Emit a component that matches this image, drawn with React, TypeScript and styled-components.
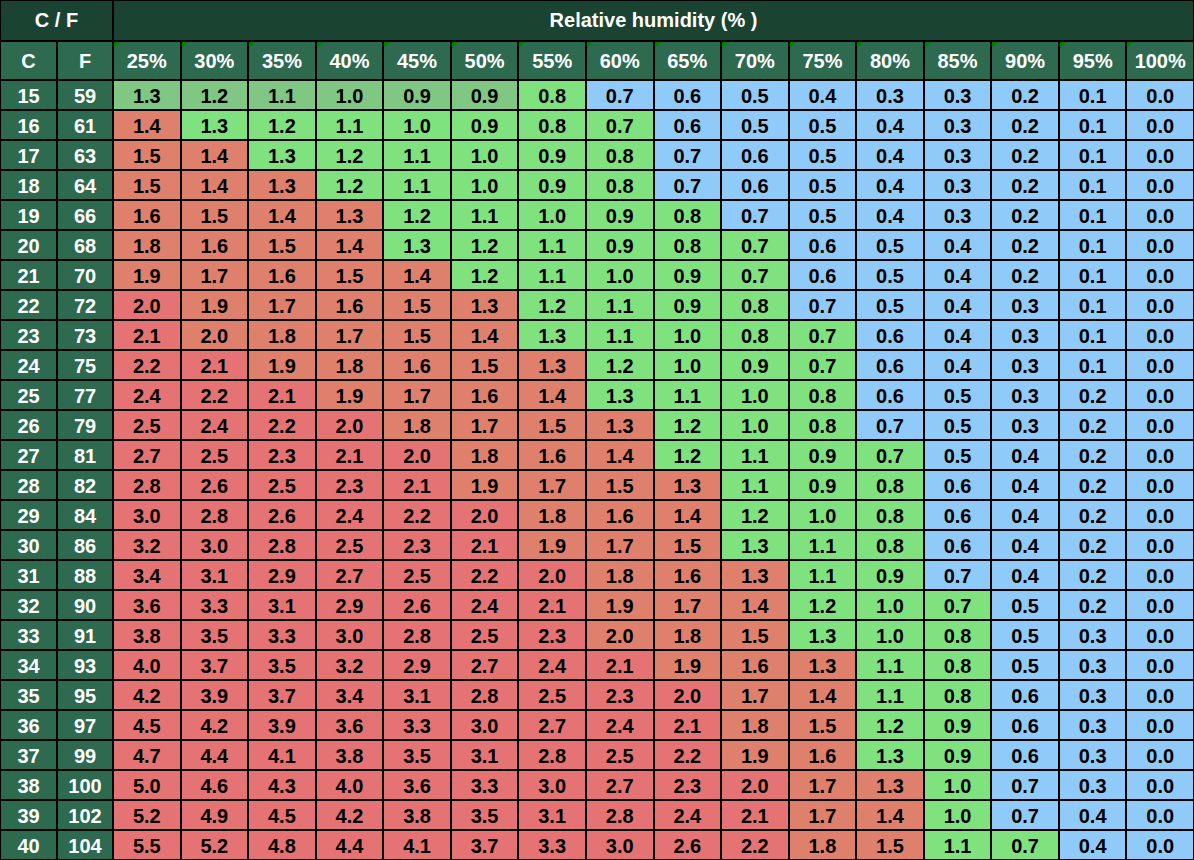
import React from 'react';
import styled, { createGlobalStyle } from 'styled-components';

const GlobalStyle = createGlobalStyle`
  html, body {
    margin: 0;
    padding: 0;
    background: #ffffff;
  }
  body {
    font-family: 'Liberation Sans', Arial, sans-serif;
  }
`;

type Tone = 'M' | 'G' | 'B' | 'S' | 'R';

const toneColors: Record<Tone, string> = {
  M: '#81c784',
  G: '#80e27e',
  B: '#90caf9',
  S: '#de806c',
  R: '#e57373',
};

const humidity = [25, 30, 35, 40, 45, 50, 55, 60, 65, 70, 75, 80, 85, 90, 95, 100];

// celsius, fahrenheit, values, colour of each cell
const rows: [number, number, string, string][] = [
  [15, 59, '1.3 1.2 1.1 1.0 0.9 0.9 0.8 0.7 0.6 0.5 0.4 0.3 0.3 0.2 0.1 0.0', 'MMMMMMGBBBBBBBBB'],
  [16, 61, '1.4 1.3 1.2 1.1 1.0 0.9 0.8 0.7 0.6 0.5 0.5 0.4 0.3 0.2 0.1 0.0', 'SGGGGGGGBBBBBBBB'],
  [17, 63, '1.5 1.4 1.3 1.2 1.1 1.0 0.9 0.8 0.7 0.6 0.5 0.4 0.3 0.2 0.1 0.0', 'SSGGGGGGBBBBBBBB'],
  [18, 64, '1.5 1.4 1.3 1.2 1.1 1.0 0.9 0.8 0.7 0.6 0.5 0.4 0.3 0.2 0.1 0.0', 'SSSGGGGGBBBBBBBB'],
  [19, 66, '1.6 1.5 1.4 1.3 1.2 1.1 1.0 0.9 0.8 0.7 0.5 0.4 0.3 0.2 0.1 0.0', 'SSSSGGGGGBBBBBBB'],
  [20, 68, '1.8 1.6 1.5 1.4 1.3 1.2 1.1 0.9 0.8 0.7 0.6 0.5 0.4 0.2 0.1 0.0', 'SSSSGGGGGGBBBBBB'],
  [21, 70, '1.9 1.7 1.6 1.5 1.4 1.2 1.1 1.0 0.9 0.7 0.6 0.5 0.4 0.2 0.1 0.0', 'SSSSSGGGGGBBBBBB'],
  [22, 72, '2.0 1.9 1.7 1.6 1.5 1.3 1.2 1.1 0.9 0.8 0.7 0.5 0.4 0.3 0.1 0.0', 'RSSSSSGGGGBBBBBB'],
  [23, 73, '2.1 2.0 1.8 1.7 1.5 1.4 1.3 1.1 1.0 0.8 0.7 0.6 0.4 0.3 0.1 0.0', 'RSSSSSGGGGGBBBBB'],
  [24, 75, '2.2 2.1 1.9 1.8 1.6 1.5 1.3 1.2 1.0 0.9 0.7 0.6 0.4 0.3 0.1 0.0', 'RRSSSSSGGGGBBBBB'],
  [25, 77, '2.4 2.2 2.1 1.9 1.7 1.6 1.4 1.3 1.1 1.0 0.8 0.6 0.5 0.3 0.2 0.0', 'RRRSSSSGGGGBBBBB'],
  [26, 79, '2.5 2.4 2.2 2.0 1.8 1.7 1.5 1.3 1.2 1.0 0.8 0.7 0.5 0.3 0.2 0.0', 'RRRRSSSSGGGBBBBB'],
  [27, 81, '2.7 2.5 2.3 2.1 2.0 1.8 1.6 1.4 1.2 1.1 0.9 0.7 0.5 0.4 0.2 0.0', 'RRRRRSSSGGGGBBBB'],
  [28, 82, '2.8 2.6 2.5 2.3 2.1 1.9 1.7 1.5 1.3 1.1 0.9 0.8 0.6 0.4 0.2 0.0', 'RRRRRSSSSGGGBBBB'],
  [29, 84, '3.0 2.8 2.6 2.4 2.2 2.0 1.8 1.6 1.4 1.2 1.0 0.8 0.6 0.4 0.2 0.0', 'RRRRRRSSSGGGBBBB'],
  [30, 86, '3.2 3.0 2.8 2.5 2.3 2.1 1.9 1.7 1.5 1.3 1.1 0.8 0.6 0.4 0.2 0.0', 'RRRRRRSSSGGGBBBB'],
  [31, 88, '3.4 3.1 2.9 2.7 2.5 2.2 2.0 1.8 1.6 1.3 1.1 0.9 0.7 0.4 0.2 0.0', 'RRRRRRRSSSGGBBBB'],
  [32, 90, '3.6 3.3 3.1 2.9 2.6 2.4 2.1 1.9 1.7 1.4 1.2 1.0 0.7 0.5 0.2 0.0', 'RRRRRRRSSSGGGBBB'],
  [33, 91, '3.8 3.5 3.3 3.0 2.8 2.5 2.3 2.0 1.8 1.5 1.3 1.0 0.8 0.5 0.3 0.0', 'RRRRRRRSSSGGGBBB'],
  [34, 93, '4.0 3.7 3.5 3.2 2.9 2.7 2.4 2.1 1.9 1.6 1.3 1.1 0.8 0.5 0.3 0.0', 'RRRRRRRRSSSGGBBB'],
  [35, 95, '4.2 3.9 3.7 3.4 3.1 2.8 2.5 2.3 2.0 1.7 1.4 1.1 0.8 0.6 0.3 0.0', 'RRRRRRRRRSSGGBBB'],
  [36, 97, '4.5 4.2 3.9 3.6 3.3 3.0 2.7 2.4 2.1 1.8 1.5 1.2 0.9 0.6 0.3 0.0', 'RRRRRRRRRSSGGBBB'],
  [37, 99, '4.7 4.4 4.1 3.8 3.5 3.1 2.8 2.5 2.2 1.9 1.6 1.3 0.9 0.6 0.3 0.0', 'RRRRRRRRRSSGGBBB'],
  [38, 100, '5.0 4.6 4.3 4.0 3.6 3.3 3.0 2.7 2.3 2.0 1.7 1.3 1.0 0.7 0.3 0.0', 'RRRRRRRRRRSSGBBB'],
  [39, 102, '5.2 4.9 4.5 4.2 3.8 3.5 3.1 2.8 2.4 2.1 1.7 1.4 1.0 0.7 0.4 0.0', 'RRRRRRRRRRSSGBBB'],
  [40, 104, '5.5 5.2 4.8 4.4 4.1 3.7 3.3 3.0 2.6 2.2 1.8 1.5 1.1 0.7 0.4 0.0', 'RRRRRRRRRRSSGGBB'],
];

const Table = styled.table`
  width: 1194px;
  table-layout: fixed;
  border-collapse: separate;
  border-spacing: 0;
  font-family: 'Liberation Sans', Arial, sans-serif;
  font-weight: bold;
  font-size: 20px;
`;

const Col = styled.col<{ $w?: number }>`
  width: ${(p) => (p.$w ? `${p.$w}px` : 'auto')};
`;

const TitleCell = styled.th`
  box-sizing: border-box;
  height: 41px;
  padding: 0;
  border: 1px solid #000;
  background: #1b4332;
  color: #ffffff;
  text-align: center;
  vertical-align: middle;
`;

const HeadCell = styled.th<{ $flag?: boolean }>`
  position: relative;
  box-sizing: border-box;
  height: 39px;
  padding: 2px 0 0;
  border: 1px solid #000;
  background: #2d6a4f;
  color: #ffffff;
  text-align: center;
  vertical-align: middle;

  &::before {
    content: '';
    display: ${(p) => (p.$flag ? 'block' : 'none')};
    position: absolute;
    top: 0;
    left: 0;
    border-top: 6px solid #008000;
    border-right: 6px solid transparent;
  }
`;

const TempCell = styled.td`
  box-sizing: border-box;
  height: 30px;
  padding: 2px 0 0;
  border: 1px solid #000;
  background: #2d6a4f;
  color: #ffffff;
  text-align: center;
  vertical-align: middle;
`;

const ValueCell = styled.td<{ $tone: Tone }>`
  box-sizing: border-box;
  height: 30px;
  padding: 2px 0 0;
  border: 1px solid #000;
  background: ${(p) => toneColors[p.$tone]};
  color: #000000;
  text-align: center;
  vertical-align: middle;
`;

export default function App() {
  return (
    <>
      <GlobalStyle />
      <Table>
        <colgroup>
          <Col $w={57} />
          <Col $w={56} />
          {humidity.map((h) => (
            <Col key={h} />
          ))}
        </colgroup>
        <thead>
          <tr>
            <TitleCell colSpan={2}>C / F</TitleCell>
            <TitleCell colSpan={16}>Relative humidity (% )</TitleCell>
          </tr>
          <tr>
            <HeadCell>C</HeadCell>
            <HeadCell>F</HeadCell>
            {humidity.map((h) => (
              <HeadCell key={h} $flag>
                {h}%
              </HeadCell>
            ))}
          </tr>
        </thead>
        <tbody>
          {rows.map(([c, f, values, tones]) => (
            <tr key={c}>
              <TempCell>{c}</TempCell>
              <TempCell>{f}</TempCell>
              {values.split(' ').map((v, i) => (
                <ValueCell key={i} $tone={tones[i] as Tone}>
                  {v}
                </ValueCell>
              ))}
            </tr>
          ))}
        </tbody>
      </Table>
    </>
  );
}
